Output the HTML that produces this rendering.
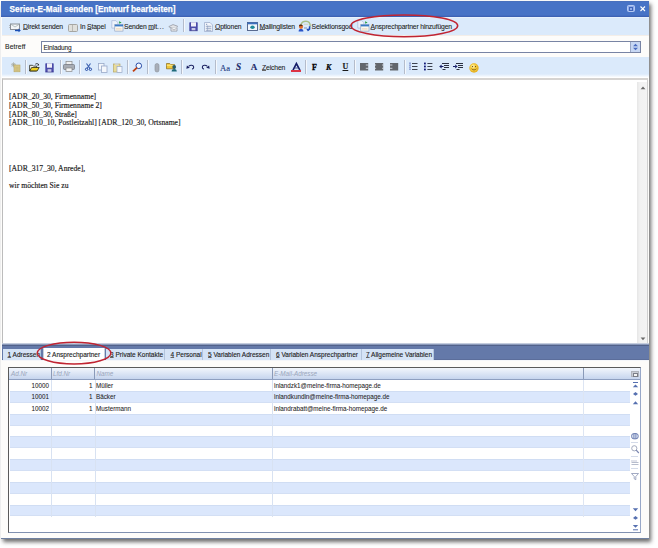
<!DOCTYPE html>
<html><head><meta charset="utf-8">
<style>
*{margin:0;padding:0;box-sizing:border-box}
html,body{width:658px;height:548px;background:#fff;overflow:hidden;position:relative;font-family:"Liberation Sans",sans-serif;}
.a{position:absolute}
.t{position:absolute;white-space:nowrap;font-size:6.8px;line-height:6.5px;color:#222;letter-spacing:-0.15px;-webkit-text-stroke:0.08px #222}
.u{text-decoration:underline;text-decoration-thickness:0.6px;text-underline-offset:0.2px;text-decoration-color:#666}
svg{position:absolute;overflow:visible}
#win{position:absolute;left:1px;top:1px;width:648px;height:538px;background:#fdfcfa;border-bottom:1px solid #6f80a0;box-shadow:2px 2.5px 4px rgba(30,30,30,0.65)}
#title{left:1px;top:1px;width:648px;height:16px;background:linear-gradient(#4a6fb8 0,#4773c6 1.5px,#4773c6 14px,#3d62b4 15.5px,#e8f0fc 16px)}
#tb1{left:2px;top:17px;width:647px;height:18.5px;background:linear-gradient(#eef5fd 0,#dbeafb 1.5px,#dbeafb 17.5px,#f4eee8 18.5px)}
#tb2{left:2px;top:57px;width:647px;height:21px;background:linear-gradient(#dbeafb 0,#dbeafb 17px,#fff 20.5px)}
.sep{position:absolute;width:1px;background:#b4bccb;box-shadow:1px 0 0 #f4f8fd}
#ed{left:2px;top:78px;width:646px;height:266px;background:#fff;border:1px solid #bcbcbc;border-top:2px solid #d6d4d2;border-right-color:#d0d0d0;border-bottom:none}
.ser{position:absolute;white-space:nowrap;font-family:"Liberation Serif",serif;font-size:7.7px;line-height:8px;color:#1a1a1a;-webkit-text-stroke:0.15px #1a1a1a}
#tabs{left:2px;top:343px;width:647px;height:18px;background:linear-gradient(#c8d0e0 0,#c0c8da 1px,#8090b4 1.6px,#4e5e86 2.4px,#6479a9 3.2px,#6479a9 16px,#5a6c98 16.6px,#8898bc 17px,#f4f6fa 17.4px)}
.tab{position:absolute;top:348.5px;height:11px;background:#d5e3f6;border-right:1px solid #b4c4dc}
.tt{position:absolute;white-space:nowrap;font-size:6.5px;line-height:6.3px;color:#222;top:352.3px;-webkit-text-stroke:0.12px #222}
#grid{left:8px;top:367px;width:633px;height:166px;background:#fff;border:1px solid #5a5a5a;border-right-color:#98a8c8;border-bottom-color:#8090b0}
.row{position:absolute;left:10px;width:620px;height:11.9px;background:#dbe7fc;border-top:1px solid #d0ddf3;border-bottom:1px solid #d3dff4}
.vl{position:absolute;width:1px;background:#d8e2f2}
.gh{position:absolute;white-space:nowrap;font-size:6.3px;line-height:6.3px;color:#9aa6bb;font-style:italic;top:371px}
.gt{position:absolute;white-space:nowrap;font-size:6.3px;line-height:6.3px;color:#222;-webkit-text-stroke:0.05px #222}
</style></head><body>
<div id="win"></div>
<div class="a" id="title"></div>
<div class="t" style="left:9.6px;top:6.1px;font-size:8.2px;line-height:8px;font-weight:bold;color:#fff;-webkit-text-stroke:0.25px #fff;letter-spacing:0.03px">Serien-E-Mail senden [Entwurf bearbeiten]</div>
<!-- title buttons -->
<div class="a" style="left:627px;top:5px;width:8px;height:7.2px;background:#90acea;border:.8px solid #b4c8f2;border-radius:1.5px"></div>
<div class="a" style="left:628.8px;top:6.6px;width:4.4px;height:4px;border:.9px solid #3f64b8"></div>
<svg style="left:639.5px;top:6px" width="6" height="5.5"><path d="M0.5 0.5L5 5M5 0.5L0.5 5" stroke="#fff" stroke-width="1.1"/></svg>

<div class="a" id="tb1"></div>
<!-- toolbar 1 icons -->
<svg style="left:9px;top:23px" width="13" height="9"><rect x="1.5" y="1" width="9" height="5.5" fill="#f4f6f8" stroke="#8a8f98" stroke-width="1"/><path d="M1.5 1L6 4L10.5 1" fill="none" stroke="#9aa" stroke-width=".7"/><path d="M0 2.5h1.5M0 4.5h1.5" stroke="#999" stroke-width=".6"/><path d="M6 7.5h5" stroke="#1a4fb5" stroke-width="1.4"/><path d="M9.5 5.5L11.8 7.5L9.5 9.2" fill="#1a4fb5"/></svg>
<div class="t" style="left:23px;top:24.1px"><span class="u">D</span>irekt senden</div>
<svg style="left:68px;top:23.5px" width="10" height="8"><rect x=".5" y=".5" width="9" height="7" rx="1" fill="#e0e0dc" stroke="#a6a6a2" stroke-width="1"/><path d="M4.5 1v6" stroke="#b8b8b4" stroke-width="1"/></svg>
<div class="t" style="left:80px;top:24.1px">In <span class="u">S</span>tapel</div>
<svg style="left:111px;top:20px" width="13" height="12"><path d="M.8 .6h4l2 2v5.5h-6z" fill="#eef3fb" stroke="#a8b8d8" stroke-width=".7"/><rect x="3.8" y="4.5" width="8.2" height="6.6" fill="#fbf8f0" stroke="#8a9ab8" stroke-width=".6"/><rect x="3.8" y="4.6" width="8.2" height="1.8" fill="#3a7ac8"/><path d="M5 8.5h5.5M5 9.8h5.5" stroke="#e8c8a8" stroke-width=".5"/><path d="M8 1.2l2.6 1.4-2.3 1.2z" fill="#28a040"/></svg>
<div class="t" style="left:124px;top:24.1px">Senden <span class="u">m</span>it<span style="letter-spacing:0.6px">...</span></div>
<svg style="left:168px;top:23.5px" width="11" height="8"><path d="M.8 2.6L5 .6L9.6 2.2L8.6 3.4L2.2 3.6z" fill="#e4e6ea" stroke="#8a8e98" stroke-width=".7"/><path d="M3 3.5v3.6h6V3.3" fill="#f0f2f4" stroke="#8a8e98" stroke-width=".7"/><path d="M3.5 4.3L6 6L8.5 4.3" fill="none" stroke="#8a8e98" stroke-width=".6"/></svg>
<div class="sep" style="left:183px;top:19px;height:13px"></div>
<svg style="left:189px;top:22px" width="9" height="9"><rect x=".3" y=".3" width="8.4" height="8.4" rx=".6" fill="#4a4aa8"/><rect x="2" y=".3" width="5" height="4.2" fill="#f0f0f8"/><rect x="2.6" y="6" width="3.8" height="2.7" fill="#c8c8e8"/><path d="M.3 8.7h8.4" stroke="#2a2a80" stroke-width=".6"/></svg>
<svg style="left:203.5px;top:21.8px" width="9" height="10"><path d="M.5 .5h5.5l2.5 2.5v6.5h-8z" fill="#f2f5fb" stroke="#98a8c8" stroke-width=".7"/><path d="M1.8 4.3h5.5M1.8 6.3h5.5M1.8 8.3h5.5" stroke="#7a8cb0" stroke-width=".7"/><path d="M3.6 3.5v5.5" stroke="#8a9cc0" stroke-width=".6"/><path d="M2 2.3h1.2" stroke="#6a7ca8" stroke-width=".8"/></svg>
<div class="t" style="left:215px;top:24.1px"><span class="u">O</span>ptionen</div>
<svg style="left:247px;top:22.3px" width="11" height="9"><rect x=".5" y=".5" width="10" height="8" fill="#f2f6fc" stroke="#4a5c84" stroke-width=".9"/><rect x=".5" y=".5" width="10" height="1.8" fill="#3b6fc0"/><ellipse cx="5.5" cy="5.3" rx="2.2" ry="1.7" fill="#1f8a9a"/></svg>
<div class="t" style="left:259.5px;top:24.1px"><span class="u">M</span>ailinglisten</div>
<svg style="left:297.5px;top:20px" width="14" height="12"><path d="M3 5.5C3 2.3 5.5 1.2 8 1.2C10.8 1.2 12.3 3 12.2 6.5" fill="none" stroke="#a8c088" stroke-width="1.5"/><path d="M5.8 4.3h4.5" stroke="#d0d8c8" stroke-width="1.2"/><circle cx="3" cy="6.8" r="2.1" fill="#e07030"/><path d="M1 6.2C1 4.6 2 4.4 3 4.5C4.2 4.6 4.8 5.2 4.6 6" fill="#5a2a10"/><path d="M.6 11.5c0-1.8 1-2.4 2.4-2.4s2.4.6 2.4 2.4z" fill="#2a54c8"/><path d="M11.6 6.3v2.6L10 10.6" fill="none" stroke="#1a4ab8" stroke-width="1.5"/><path d="M8.4 9l1.6 2.4.9-3z" fill="#1a4ab8"/><path d="M6 8h3" stroke="#7890b8" stroke-width="1"/></svg>
<div class="t" style="left:311.6px;top:24.1px">Selektionsgod</div>
<svg style="left:357px;top:20px" width="13" height="12"><path d="M.8 .6h4l2 2v5.5h-6z" fill="#eef3fb" stroke="#a8b8d8" stroke-width=".7"/><rect x="3.8" y="4.5" width="8.2" height="6.6" fill="#fbf8f0" stroke="#8a9ab8" stroke-width=".6"/><rect x="3.8" y="4.6" width="8.2" height="1.8" fill="#3a7ac8"/><path d="M5 8.5h5.5M5 9.8h5.5" stroke="#e8c8a8" stroke-width=".5"/><path d="M8 1.2l2.6 1.4-2.3 1.2z" fill="#28a040"/></svg>
<div class="t" style="left:370.5px;top:24.1px"><span class="u">A</span>nsprechpartner hinzufügen</div>

<!-- Betreff row -->
<div class="t" style="left:5px;top:44.2px;font-size:6.8px;letter-spacing:0.1px">Betreff</div>
<div class="a" style="left:40.7px;top:41.2px;width:600px;height:11.6px;background:#fff;border:1.3px solid #7884a4"></div>
<div class="t" style="left:43.5px;top:44.5px;font-size:6.6px">Einladung</div>
<div class="a" style="left:630px;top:42.3px;width:9.5px;height:9.4px;background:#c7d7f3;border-left:1px solid #9aa8c6"></div>
<svg style="left:631.5px;top:43px" width="7" height="8"><path d="M3.5 .8L6 3.3H1z M3.5 7.2L6 4.7H1z" fill="#4a6cc0"/></svg>

<div class="a" id="tb2"></div>

<!-- toolbar 2 icons -->
<svg style="left:11px;top:62px" width="10" height="10"><path d="M2.5 0.3v5M0 2.8h5M0.8 1l3.4 3.6M4.2 1L0.8 4.6" stroke="#a0a498" stroke-width=".7"/><rect x="3" y="3" width="6" height="6.8" fill="#d8c888" stroke="#b8a868" stroke-width=".6"/><path d="M4.3 5.3h3.4M4.3 6.8h3.4M4.3 8.3h3.4" stroke="#c0ae70" stroke-width=".5"/></svg>
<div class="sep" style="left:25px;top:60px;height:13.5px"></div>
<svg style="left:28.8px;top:62.8px" width="11" height="9"><path d="M.6 2.3h3l.8.8h3.2v4.9H.6z" fill="#f2f0e4" stroke="#2a2a20" stroke-width=".8"/><path d="M.8 7.9l1.8-3.4h7.6l-2 3.4z" fill="#f0d020" stroke="#2a2a10" stroke-width=".8"/><path d="M6.3 1.2c1.2-.9 2.4-.7 3.2.3" fill="none" stroke="#222" stroke-width=".9"/><path d="M9.9.6v1.8H8.1z" fill="#222"/></svg>
<svg style="left:45px;top:62.5px" width="9" height="9.5"><rect x=".3" y=".3" width="8.4" height="8.8" rx=".6" fill="#4a4aa8"/><rect x="2" y=".3" width="5" height="4.4" fill="#f0f0f8"/><rect x="2.6" y="6.2" width="3.8" height="2.9" fill="#c8c8e8"/><path d="M.3 9.1h8.4" stroke="#2a2a80" stroke-width=".6"/></svg>
<div class="sep" style="left:59.5px;top:60px;height:13.5px"></div>
<svg style="left:63px;top:61px" width="12" height="11"><rect x="3" y=".5" width="6" height="3.5" fill="#f0f0f0" stroke="#888" stroke-width=".7"/><rect x=".5" y="3.5" width="11" height="5" rx="1" fill="#a8acb4" stroke="#70747c" stroke-width=".7"/><rect x="3" y="7" width="6" height="3.5" fill="#f4f4f4" stroke="#888" stroke-width=".7"/></svg>
<div class="sep" style="left:78.5px;top:60px;height:13.5px"></div>
<svg style="left:84.5px;top:63px" width="7" height="8"><path d="M1.5 .5L5 5.5M5.5 .5L2 5.5" stroke="#3a5fb0" stroke-width="1.1"/><circle cx="1.6" cy="6.3" r="1.2" fill="none" stroke="#2a50a8" stroke-width="1"/><circle cx="5.4" cy="6.3" r="1.2" fill="none" stroke="#2a50a8" stroke-width="1"/></svg>
<svg style="left:97.5px;top:62.5px" width="10" height="10"><rect x=".5" y=".5" width="5.5" height="6.5" fill="#f4f7fc" stroke="#98a8c8" stroke-width=".8"/><rect x="3.5" y="3" width="5.5" height="6.5" fill="#f4f7fc" stroke="#98a8c8" stroke-width=".8"/></svg>
<svg style="left:112.5px;top:62.5px" width="10" height="10"><rect x=".5" y="1" width="6.5" height="8" fill="#e8dc9a" stroke="#b8a868" stroke-width=".7"/><rect x="2" y=".3" width="3.5" height="1.5" fill="#cfd4dc"/><rect x="4" y="3.5" width="5" height="6" fill="#f6f8fc" stroke="#98a8c8" stroke-width=".7"/></svg>
<div class="sep" style="left:127px;top:60px;height:13.5px"></div>
<svg style="left:132px;top:62px" width="11" height="10"><circle cx="6.8" cy="3.8" r="2.8" fill="#f4f8ff" stroke="#2a4ea8" stroke-width="1"/><path d="M5 5.6L1 9.3" stroke="#c04010" stroke-width="1.8"/></svg>
<div class="sep" style="left:146.5px;top:60px;height:13.5px"></div>
<svg style="left:154px;top:62.5px" width="6" height="10"><rect x="1" y=".5" width="4" height="8.5" rx="2" fill="#a8aeb8" stroke="#8a9098" stroke-width=".6"/></svg>
<svg style="left:165.5px;top:62.3px" width="11" height="10"><path d="M.5 1.5h3.2l1 1h3.8v4.3H.5z" fill="#f0c838" stroke="#8a6a18" stroke-width=".7"/><path d="M.8 3.3h7.4" stroke="#fff0a0" stroke-width=".8"/><circle cx="8.2" cy="5" r="1.9" fill="#2a5a6a"/><path d="M5.6 9.6c0-2 1.2-2.7 2.6-2.7s2.6.7 2.6 2.7z" fill="#1e6a7a"/></svg>
<div class="sep" style="left:180.5px;top:60px;height:13.5px"></div>
<svg style="left:186px;top:64.3px" width="9" height="6"><path d="M2.6 2.3C4.3 .9 7.3 .9 7.6 2.9C7.8 4.4 7 5 6 4.9" fill="none" stroke="#1a2060" stroke-width="1.1"/><path d="M.3 4.8L.9 1.4L3.8 3.8z" fill="#1a2060"/></svg>
<svg style="left:201px;top:64.3px" width="9" height="6"><path d="M6.4 2.3C4.7 .9 1.7 .9 1.4 2.9C1.2 4.4 2 5 3 4.9" fill="none" stroke="#1a2060" stroke-width="1.1"/><path d="M8.7 4.8L8.1 1.4L5.2 3.8z" fill="#1a2060"/></svg>
<div class="sep" style="left:215px;top:60px;height:13.5px"></div>
<div class="ser" style="left:220px;top:63.8px;font-size:8.6px;color:#203880;-webkit-text-stroke:0.1px #203880">Aa</div>
<div class="ser" style="left:236px;top:63px;font-size:9.3px;font-weight:bold;font-style:italic;color:#1a2a78">S</div>
<div class="ser" style="left:250.8px;top:63.2px;font-size:9px;font-weight:bold;color:#1a2a78">A</div>
<div class="t" style="left:262px;top:65px"><span class="u">Z</span>eichen</div>
<svg style="left:291.5px;top:63px" width="9" height="7.5"><path d="M1 7.2L4.4 .6L7.9 7.2" fill="none" stroke="#161e6a" stroke-width="1.6"/><path d="M2.8 5h3.4" stroke="#161e6a" stroke-width=".7"/></svg>
<div class="a" style="left:291px;top:70.3px;width:9.5px;height:1.9px;background:#dc3444"></div>
<div class="sep" style="left:305px;top:60px;height:13.5px"></div>
<div class="ser" style="left:312px;top:63.5px;font-size:8px;font-weight:bold;color:#000;-webkit-text-stroke:.3px #000">F</div>
<div class="ser" style="left:326px;top:63.5px;font-size:8px;font-weight:bold;font-style:italic;color:#000;-webkit-text-stroke:.2px #000">K</div>
<div class="ser" style="left:342.5px;top:63.3px;font-size:8px;font-weight:bold;color:#202020;text-decoration:underline">U</div>
<div class="sep" style="left:354px;top:60px;height:13.5px"></div>
<svg style="left:360px;top:63px" width="9" height="8"><rect x="0" y="0" width="8.2" height="7.5" fill="#62666c"/><path d="M5.8 2h2.6M5.8 5.3h2.6" stroke="#e8eef8" stroke-width=".8"/></svg>
<svg style="left:375px;top:63px" width="9" height="8"><rect x="0" y="0" width="8.2" height="7.5" fill="#62666c"/><path d="M-.2 2h1.3M7.1 2h1.3M-.2 5.3h1.3M7.1 5.3h1.3" stroke="#e8eef8" stroke-width=".8"/></svg>
<svg style="left:390px;top:63px" width="9" height="8"><rect x="0" y="0" width="8.2" height="7.5" fill="#62666c"/><path d="M-.2 2h2.6M-.2 5.3h2.6" stroke="#e8eef8" stroke-width=".8"/></svg>
<div class="sep" style="left:403.5px;top:60px;height:13.5px"></div>
<svg style="left:409px;top:62px" width="9" height="9"><path d="M3 1.5h5.5M3 4.5h5.5M3 7.5h5.5" stroke="#3c4250" stroke-width="1"/><path d="M1 .5v8" stroke="#3048a8" stroke-width="1" stroke-dasharray="1.3 .7"/></svg>
<svg style="left:424px;top:62px" width="9" height="9"><path d="M3.4 1.5h5M3.4 4.5h5M3.4 7.5h5" stroke="#3c4250" stroke-width="1"/><rect x="0" y=".6" width="1.8" height="1.8" fill="#101878"/><rect x="0" y="3.6" width="1.8" height="1.8" fill="#101878"/><rect x="0" y="6.6" width="1.8" height="1.8" fill="#101878"/></svg>
<svg style="left:439px;top:62px" width="10" height="9"><path d="M3 1.5h7M5 3.5h5M5 5.5h5M3.5 7.5h3" stroke="#2c3040" stroke-width="1"/><path d="M.2 4.5L2.6 2.6v3.8z" fill="#182068"/><path d="M2 4.5h2.5" stroke="#182068" stroke-width="1"/></svg>
<svg style="left:453px;top:62px" width="10" height="9"><path d="M3 1.5h7M5 3.5h5M5 5.5h5M3.5 7.5h3" stroke="#2c3040" stroke-width="1"/><path d="M4.6 4.5L2.2 2.6v3.8z" fill="#182068"/><path d="M0 4.5h2.5" stroke="#182068" stroke-width="1"/></svg>
<svg style="left:468.5px;top:62.5px" width="10" height="10"><circle cx="5" cy="5" r="4.7" fill="#e8b428"/><circle cx="4.6" cy="4.4" r="3.6" fill="#f4cc40"/><circle cx="4" cy="3.4" r="1.8" fill="#fbe890"/><circle cx="3.5" cy="3.6" r=".6" fill="#604010"/><circle cx="6.5" cy="3.6" r=".6" fill="#604010"/><path d="M2.6 5.8c1.3 1.5 3.5 1.5 4.8 0" fill="none" stroke="#604010" stroke-width=".7"/></svg>
<!-- editor -->
<div class="a" id="ed"></div>
<div class="a" style="left:637px;top:82px;width:10px;height:260.5px;background:linear-gradient(90deg,#e6e6e6,#f2f2f2 30%,#f4f4f4)"></div>
<svg style="left:639.5px;top:86px" width="6" height="4"><path d="M.6 3.2L3 .6 5.4 3.2z" fill="#6a6a6a"/></svg>
<svg style="left:639.5px;top:337px" width="6" height="4"><path d="M.6 .6L3 3.2 5.4 .6z" fill="#6a6a6a"/></svg>
<div class="ser" style="left:9px;top:92.9px">[ADR_20_30, Firmenname]</div>
<div class="ser" style="left:9px;top:101.6px">[ADR_50_30, Firmenname 2]</div>
<div class="ser" style="left:9px;top:111.1px">[ADR_80_30, Straße]</div>
<div class="ser" style="left:9px;top:119.2px">[ADR_110_10, Postleitzahl] [ADR_120_30, Ortsname]</div>
<div class="ser" style="left:9px;top:164.8px">[ADR_317_30, Anrede],</div>
<div class="ser" style="left:9px;top:181.8px">wir möchten Sie zu</div>

<!-- tabs -->
<div class="a" id="tabs"></div>
<div class="tab" style="left:2.5px;width:38px"></div>
<div class="tab" style="left:42.5px;width:62.5px;top:348px;height:12px;background:#fff;border-left:1px solid #c8d0dc;border-right:1px solid #c8d0dc"></div>
<div class="tab" style="left:106px;width:59px"></div>
<div class="tab" style="left:165px;width:37.5px"></div>
<div class="tab" style="left:202.5px;width:68.5px"></div>
<div class="tab" style="left:271px;width:90.5px"></div>
<div class="tab" style="left:361.5px;width:72px"></div>
<div class="tt" style="left:7.5px"><span class="u">1</span> Adressen</div>
<div class="tt" style="left:47px">2 Ansprechpartner</div>
<div class="tt" style="left:110px"><span class="u">3</span> Private Kontakte</div>
<div class="tt" style="left:170.5px"><span class="u">4</span> Personal</div>
<div class="tt" style="left:208px"><span class="u">5</span> Variablen Adressen</div>
<div class="tt" style="left:276px"><span class="u">6</span> Variablen Ansprechpartner</div>
<div class="tt" style="left:366px"><span class="u">7</span> Allgemeine Variablen</div>

<!-- grid -->
<div class="a" id="grid"></div>
<div class="a" style="left:9px;top:368px;width:631px;height:11.5px;background:linear-gradient(#f2f6fc,#c6d5ee);border-bottom:1px solid #8e9fc0"></div>
<div class="row" style="top:391.10px"></div>
<div class="row" style="top:413.78px"></div>
<div class="row" style="top:436.46px"></div>
<div class="row" style="top:459.14px"></div>
<div class="row" style="top:481.82px"></div>
<div class="row" style="top:504.50px"></div>

<div class="a" style="left:50.5px;top:368px;width:1px;height:11px;background:#8a9ab8"></div>
<div class="a" style="left:94px;top:368px;width:1px;height:11px;background:#8a9ab8"></div>
<div class="a" style="left:271.5px;top:368px;width:1px;height:11px;background:#8a9ab8"></div>
<div class="a" style="left:583px;top:368px;width:1px;height:11px;background:#8a9ab8"></div>
<div class="vl" style="left:51px;top:380px;height:136.5px"></div>
<div class="vl" style="left:94.5px;top:380px;height:136.5px"></div>
<div class="vl" style="left:272px;top:380px;height:136.5px"></div>
<div class="vl" style="left:583px;top:380px;height:136.5px;background:#dde5f3"></div>
<div class="gh" style="left:11px">Ad.Nr</div>
<div class="gh" style="left:53px">Lfd.Nr</div>
<div class="gh" style="left:96.5px">Name</div>
<div class="gh" style="left:274px">E-Mail-Adresse</div>
<div class="gt" style="left:20px;width:29px;text-align:right;top:383px">10000</div>
<div class="gt" style="left:60px;width:32.5px;text-align:right;top:383px">1</div>
<div class="gt" style="left:96px;top:383px">Müller</div>
<div class="gt" style="left:274px;top:383px">inlandzk1@meine-firma-homepage.de</div>
<div class="gt" style="left:20px;width:29px;text-align:right;top:394.4px">10001</div>
<div class="gt" style="left:60px;width:32.5px;text-align:right;top:394.4px">1</div>
<div class="gt" style="left:96px;top:394.4px">Bäcker</div>
<div class="gt" style="left:274px;top:394.4px">inlandkundin@meine-firma-homepage.de</div>
<div class="gt" style="left:20px;width:29px;text-align:right;top:405.8px">10002</div>
<div class="gt" style="left:60px;width:32.5px;text-align:right;top:405.8px">1</div>
<div class="gt" style="left:96px;top:405.8px">Mustermann</div>
<div class="gt" style="left:274px;top:405.8px">inlandrabatt@meine-firma-homepage.de</div>
<!-- grid right icons -->
<div class="a" style="left:631px;top:370.5px;width:7.5px;height:6.5px;background:#c8ccd4;border:1px solid #b0b4bc"></div>
<div class="a" style="left:633.3px;top:372.8px;width:5px;height:3.8px;border:1px solid #7a7e88;background:#f4f4f4"></div>
<svg style="left:632px;top:381.5px" width="7" height="6"><path d="M1 .5h5" stroke="#5670b0" stroke-width="1"/><path d="M3.5 2.6L6.2 5.3H.8z" fill="#5670b0"/></svg>
<svg style="left:632px;top:392.3px" width="7" height="5"><path d="M3.5 0L6 1.9 3.5 3.8 1 1.9z" fill="#5670b0"/></svg>
<svg style="left:632px;top:400.8px" width="7" height="4"><path d="M3.5 .3L6.2 3.3H.8z" fill="#5670b0"/></svg>
<svg style="left:631.3px;top:432.8px" width="8" height="6.5"><rect x=".6" y=".6" width="6.6" height="5.2" rx="2.2" fill="#dfe6f4" stroke="#6a7cb0" stroke-width="1"/><path d="M2.9 .6v5.2M4.9 .6v5.2" stroke="#6a7cb0" stroke-width=".9"/></svg>
<svg style="left:631px;top:444.5px" width="8" height="9"><circle cx="3.3" cy="3.3" r="2.6" fill="none" stroke="#9aa2b8" stroke-width=".9"/><path d="M5.2 5.2L7.8 8" stroke="#7a86b0" stroke-width="1.2"/></svg>
<svg style="left:631px;top:460px" width="8" height="6"><path d="M.5 2.5h7M.5 4.5h7" stroke="#98a0b8" stroke-width=".7"/><path d="M1 0v2M3 0v2M5 0v2" stroke="#98a0b8" stroke-width=".6"/></svg>
<svg style="left:631px;top:473px" width="8" height="7"><path d="M.5 .5h7L4.8 3.5v3.2L3.2 5.8V3.5z" fill="none" stroke="#8a94b4" stroke-width=".8"/></svg>
<div class="a" style="left:631px;top:442px;width:7px;height:.7px;background:#d4dbe9"></div>
<div class="a" style="left:631px;top:455.5px;width:7px;height:.7px;background:#d4dbe9"></div>
<div class="a" style="left:631px;top:468px;width:7px;height:.7px;background:#d4dbe9"></div>
<svg style="left:632px;top:507.8px" width="7" height="4"><path d="M3.5 3.3L6.2 .3H.8z" fill="#5670b0"/></svg>
<svg style="left:632px;top:516.2px" width="7" height="5"><path d="M3.5 0L6 1.9 3.5 3.8 1 1.9z" fill="#5670b0"/></svg>
<svg style="left:632px;top:524.5px" width="7" height="6"><path d="M3.5 2.8L6.2 0H.8z" fill="#5670b0"/><path d="M1 4.8h5" stroke="#5670b0" stroke-width="1"/></svg>
<!-- red ellipses -->
<svg style="left:0;top:0" width="658" height="548"><ellipse cx="404.3" cy="25.8" rx="53.4" ry="10.9" fill="none" stroke="#c02432" stroke-width="1.5"/><ellipse cx="74.1" cy="353.1" rx="36.8" ry="10.9" fill="none" stroke="#c02432" stroke-width="1.5"/></svg>

</body></html>
